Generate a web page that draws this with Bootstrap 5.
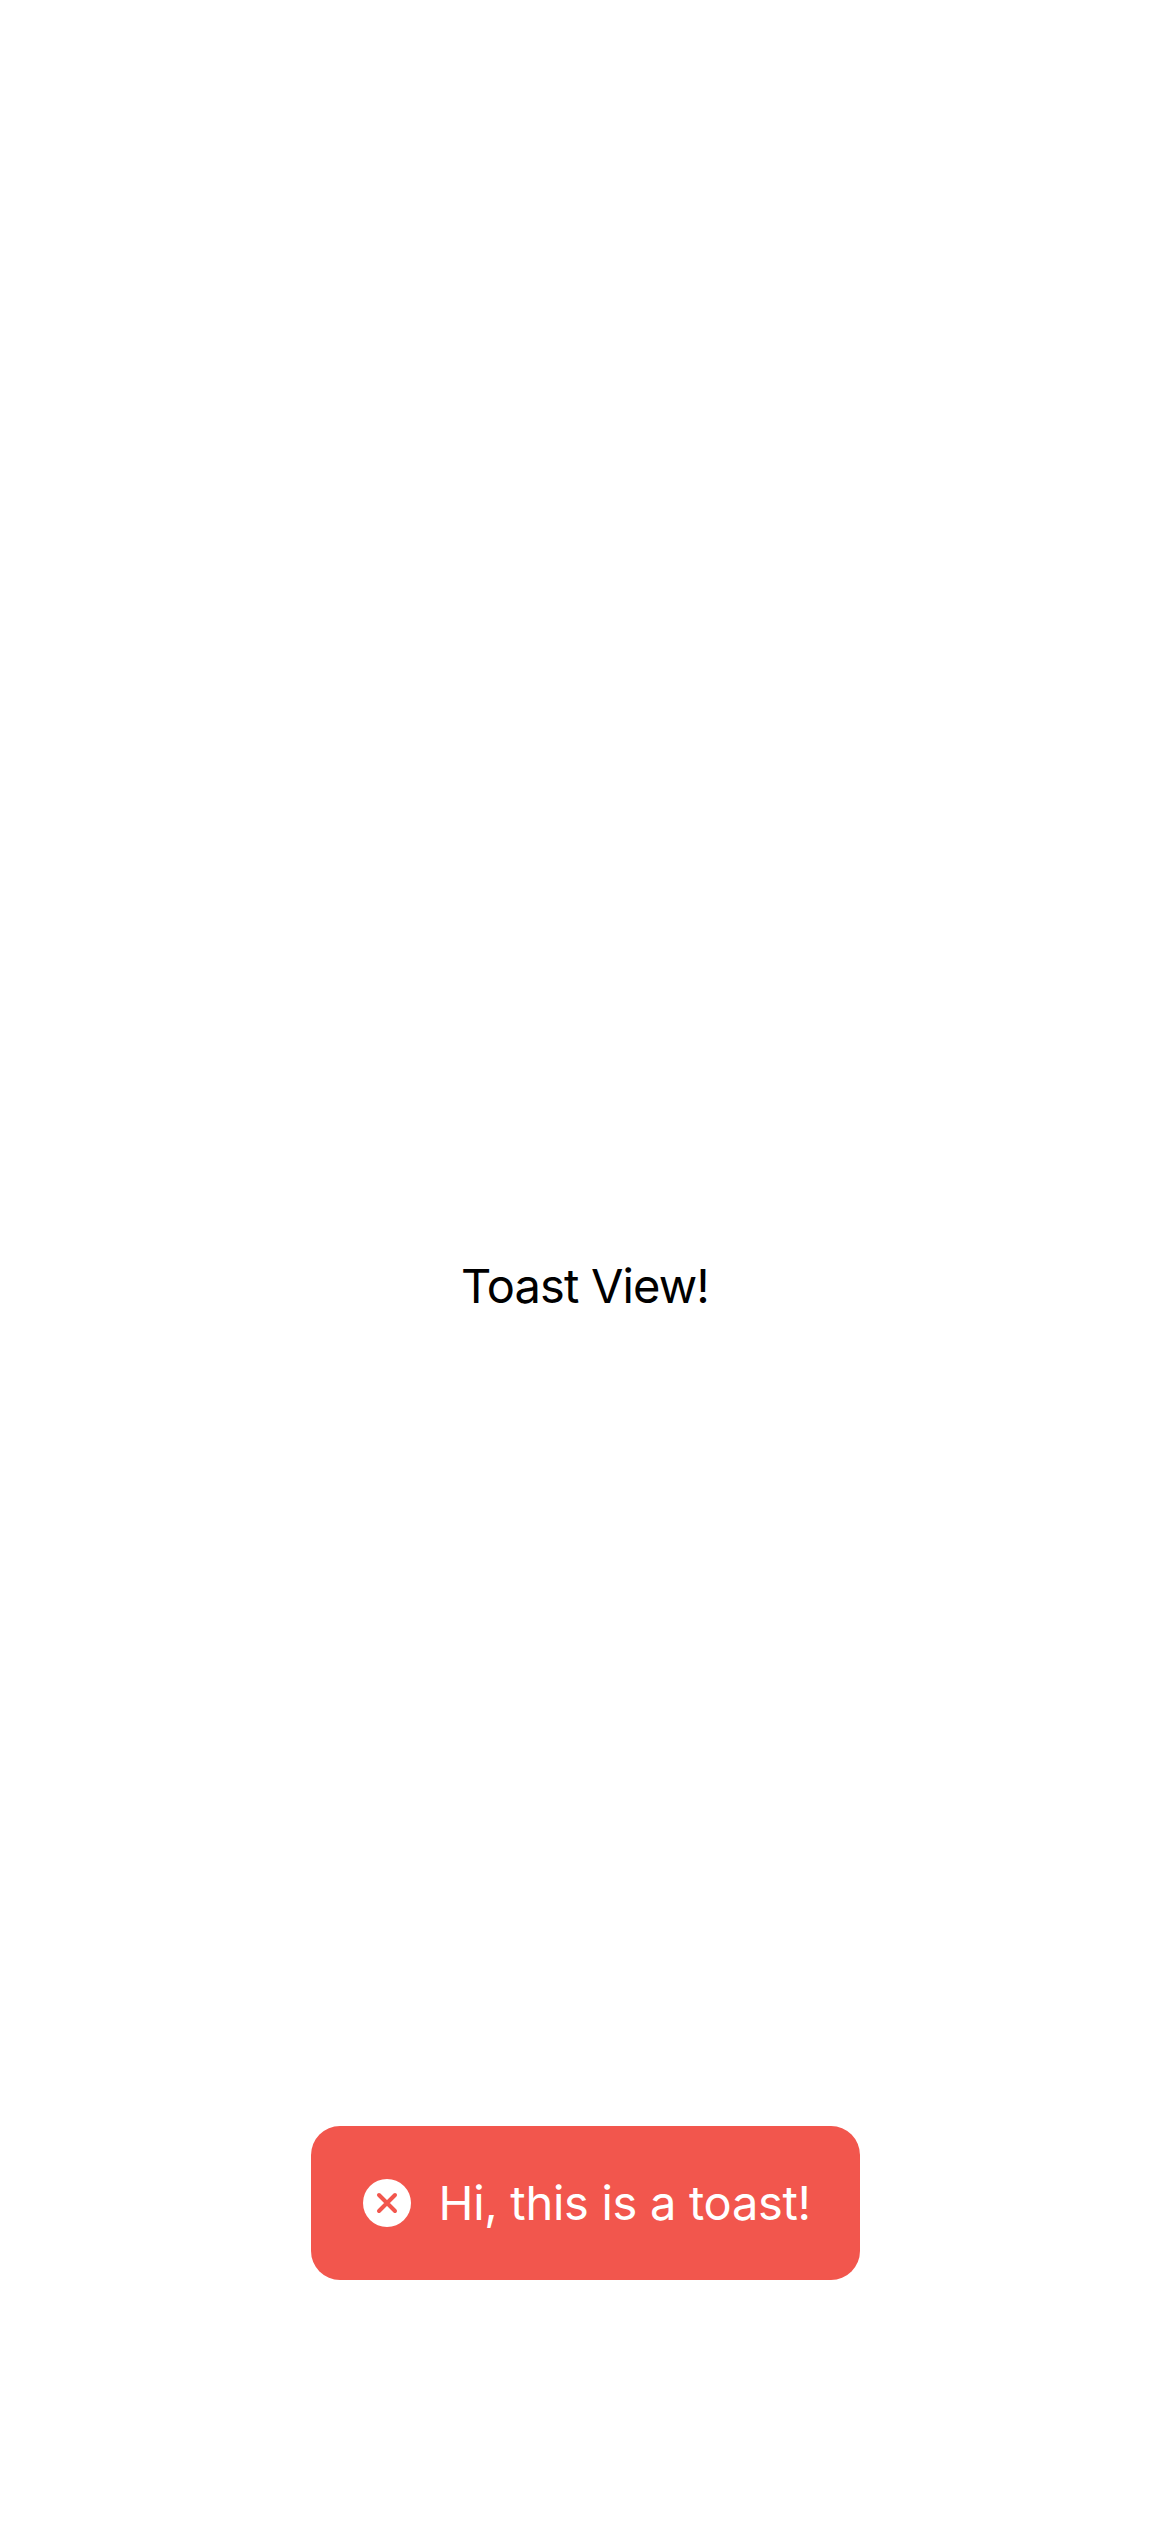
<!DOCTYPE html>
<html lang="en">
<head>
<meta charset="utf-8">
<meta name="viewport" content="width=device-width, initial-scale=1">
<title>Toast View</title>
<link href="https://cdn.jsdelivr.net/npm/bootstrap@5.3.0/dist/css/bootstrap.min.css" rel="stylesheet">
<style>
body{font-family:Inter,"Liberation Sans",sans-serif;color:#000;height:2532px;font-size:47px;line-height:60px}
.view-title{letter-spacing:-.85px;padding-top:1256px;height:2126px}
.toast-box{width:549px;height:154px;margin-left:1px;border-radius:29px;background:#f2564d;color:#fff;padding-left:52px}
.toast-icon{width:48px;height:48px;margin-right:27.5px}
.toast-text{letter-spacing:-.3px}
</style>
<script src="https://cdn.jsdelivr.net/npm/bootstrap@5.3.0/dist/js/bootstrap.bundle.min.js" defer></script>
</head>
<body class="bg-white overflow-hidden">
<main class="d-flex flex-column align-items-center">
<div class="view-title text-nowrap"><span>Toast View!</span></div>
<div class="toast-box d-flex align-items-center" role="alert">
<svg class="toast-icon flex-shrink-0" viewBox="0 0 48 48" aria-hidden="true"><circle cx="24" cy="24" r="24" fill="#fff"/><path d="M16 16l16 16M32 16L16 32" stroke="#f2564d" stroke-width="4" stroke-linecap="round"/></svg>
<span class="toast-text text-nowrap">Hi, this is a toast!</span>
</div>
</main>
</body>
</html>
